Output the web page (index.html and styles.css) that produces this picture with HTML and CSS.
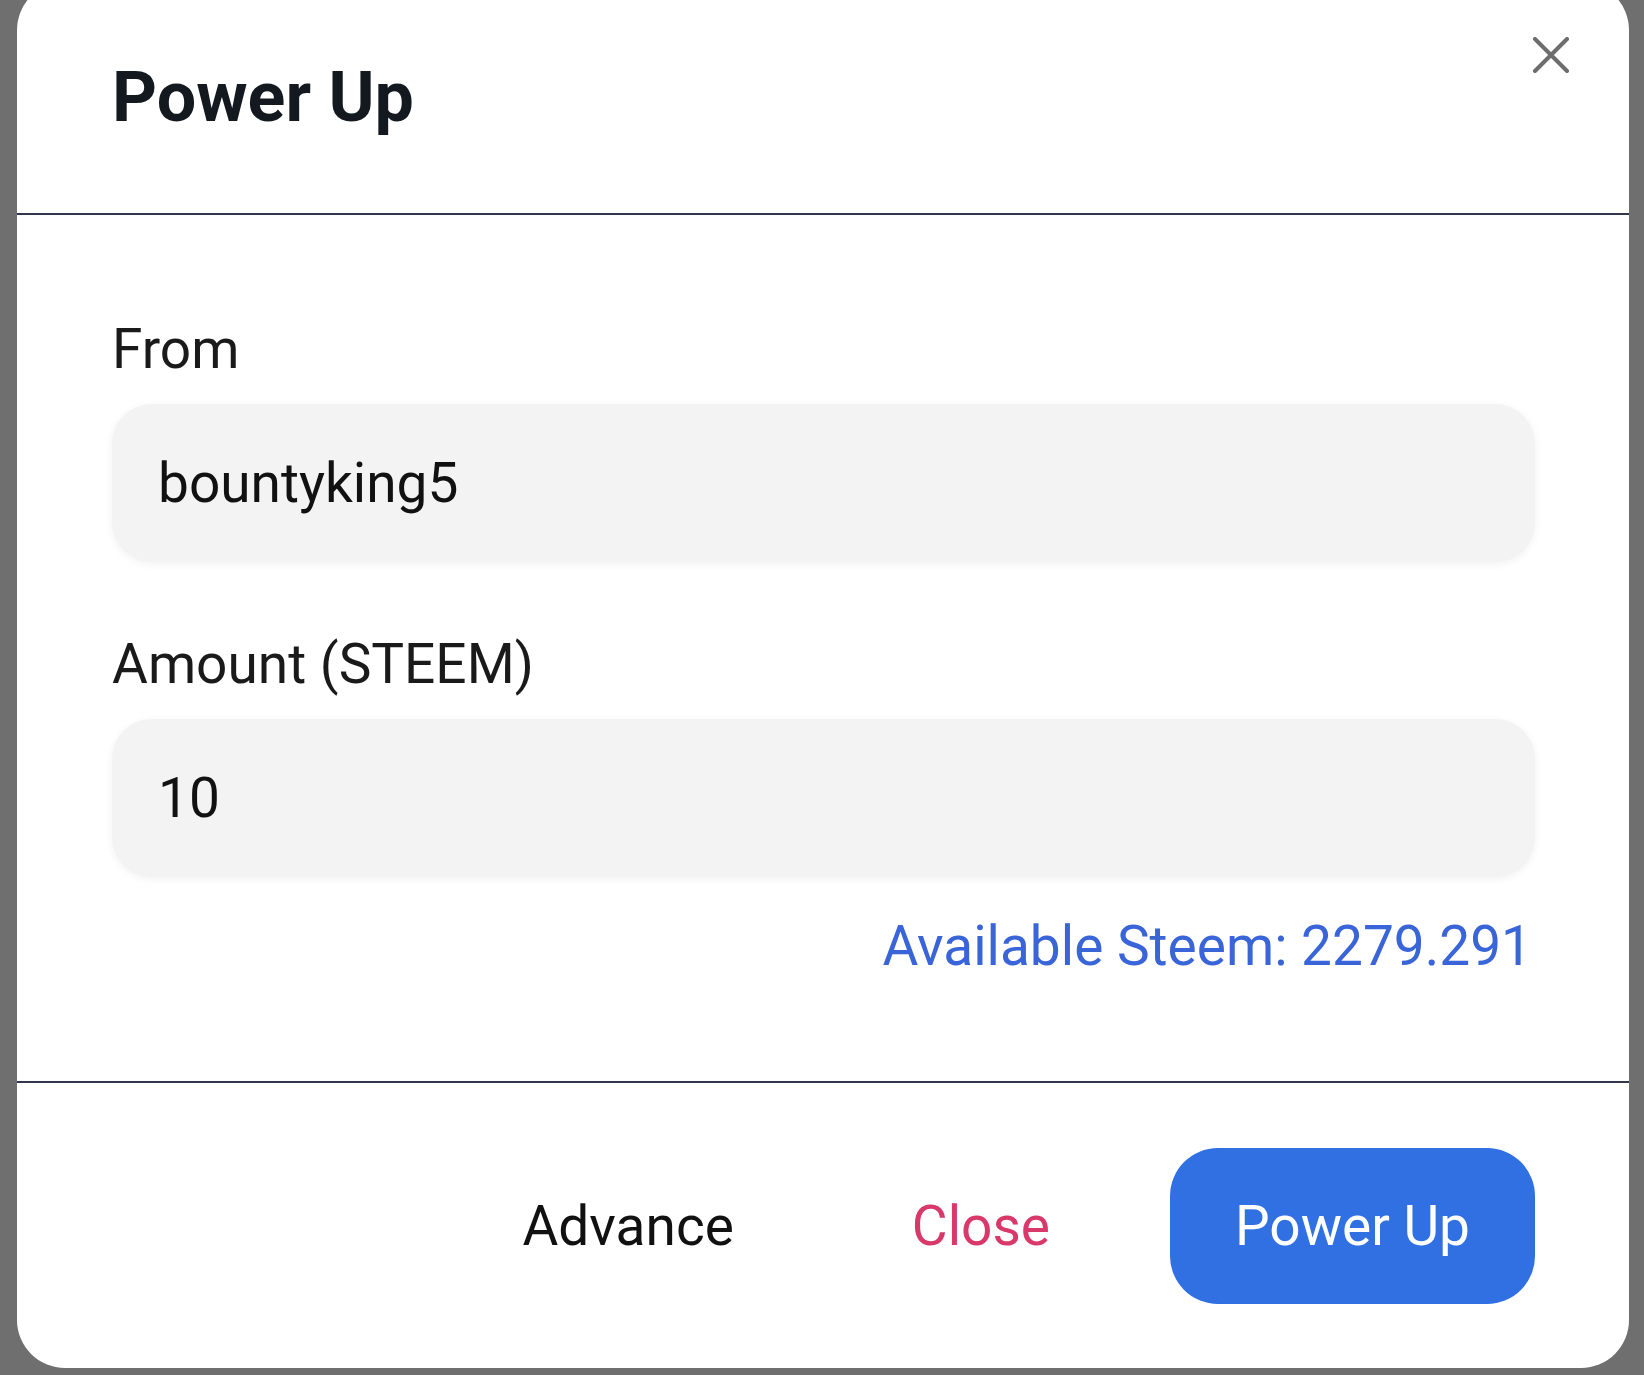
FILE: index.html
```html
<!DOCTYPE html>
<html>
<head>
<title>Power Up</title>
<link rel="stylesheet" href="styles.css">
</head>
<body>

<!-- power up dialog -->
<div class="modal">
  <div class="modalHeader">
    <h2 class="modalTitle">Power Up</h2>
    <button class="closeIcon" aria-label="Close">
      <svg viewBox="0 0 38 36" width="38" height="36">
        <path d="M3 2 L35 34 M35 2 L3 34" stroke="currentColor" stroke-width="4" stroke-linecap="round" fill="none"/>
      </svg>
    </button>
  </div>

  <div class="modalBody">
    <div class="field">
      <label class="fieldLabel">From</label>
      <input class="fieldInput" type="text" value="bountyking5">
    </div>
    <div class="field field-last">
      <label class="fieldLabel">Amount (STEEM)</label>
      <input class="fieldInput" type="text" value="10">
    </div>
    <div class="available">Available Steem: 2279.291</div>
  </div>

  <div class="modalFooter">
    <button class="textButton">Advance</button>
    <button class="textButton closeButton">Close</button>
    <button class="primaryButton">Power Up</button>
  </div>
</div>

</body>
</html>
```

FILE: styles.css
```css
:root {
  --backdrop: #6f6f6f;
  --divider: #30374a;
  --input-bg: #f3f3f3;
  --link-blue: #3a65d9;
  --primary: #3070e3;
  --danger: #d8386a;
}

html, body {
  margin: 0;
  height: 100%;
  overflow: hidden;
}

body {
  background-color: var(--backdrop);
  font-family: Roboto, "Liberation Sans", sans-serif;
  color: #161a1f;
}

.modal {
  margin-left: 17px;
  margin-top: -18px;
  width: 1612px;
  height: 1386px;
  background: #ffffff;
  border-radius: 48px;
  display: flex;
  flex-direction: column;
  position: relative;
}

/* header: title + close icon */
.modalHeader {
  padding: 73px 95px 74px;
  border-bottom: 2px solid var(--divider);
}

.modalTitle {
  margin: 0;
  font-size: 70px;
  line-height: 84px;
  font-weight: 700;
  color: #14191f;
}

.closeIcon {
  position: absolute;
  top: 55px;
  right: 59px;
  width: 38px;
  height: 36px;
  padding: 0;
  border: none;
  background: none;
  color: #6d6d6d;
}

.closeIcon svg {
  display: block;
}

/* body: form fields */
.modalBody {
  padding: 101px 94px 102px 95px;
  border-bottom: 2px solid var(--divider);
}

.field {
  display: flex;
  flex-direction: column;
  margin-bottom: 69px;
}

.field-last {
  margin-bottom: 36px;
}

.fieldLabel {
  font-size: 55px;
  line-height: 66px;
  color: #1a1a1a;
  margin-bottom: 22px;
}

.fieldInput {
  height: 158px;
  box-sizing: border-box;
  padding: 0 46px;
  border: none;
  border-radius: 40px;
  background: var(--input-bg);
  box-shadow: 0 2px 8px rgba(0, 0, 0, 0.06);
  font-family: inherit;
  font-size: 55px;
  color: #111111;
  outline: none;
}

.available {
  text-align: right;
  padding-right: 3px;
  font-size: 55px;
  line-height: 66px;
  color: var(--link-blue);
}

/* footer: actions */
.modalFooter {
  flex-grow: 1;
  display: flex;
  justify-content: flex-end;
  align-items: center;
  gap: 62px;
  padding: 0 94px;
}

.textButton {
  padding: 0 58px;
  border: none;
  background: none;
  font-family: inherit;
  font-size: 55px;
  color: #111111;
}

.closeButton {
  color: var(--danger);
}

.primaryButton {
  height: 156px;
  padding: 0 65px;
  border: none;
  border-radius: 48px;
  background: var(--primary);
  color: #ffffff;
  font-family: inherit;
  font-size: 55px;
}
```
